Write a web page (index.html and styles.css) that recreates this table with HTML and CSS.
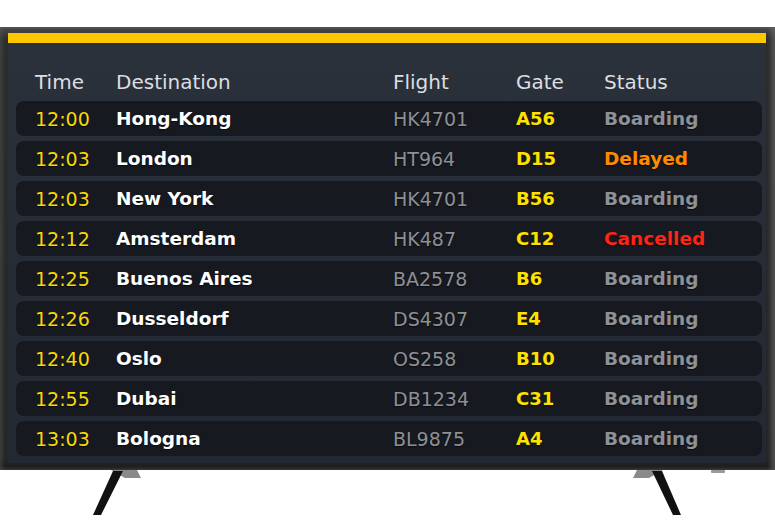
FILE: index.html
```html
<!DOCTYPE html>
<html lang="en">
<head>
    <meta charset="UTF-8">
    <meta name="viewport" content="width=device-width, initial-scale=1.0">
    <title>Departures</title>
    <link rel="stylesheet" href="styles.css">
</head>
<body>
    <div class="tv">
        <div class="screen">
            <div class="board-head">
                <span>Time</span>
                <span>Destination</span>
                <span>Flight</span>
                <span>Gate</span>
                <span>Status</span>
            </div>

            <div class="rows">
                <div class="row"><span class="time">12:00</span><span class="dest">Hong-Kong</span><span class="flight">HK4701</span><span class="gate">A56</span><span class="status">Boarding</span></div>
                <div class="row"><span class="time">12:03</span><span class="dest">London</span><span class="flight">HT964</span><span class="gate">D15</span><span class="status delayed">Delayed</span></div>
                <div class="row"><span class="time">12:03</span><span class="dest">New York</span><span class="flight">HK4701</span><span class="gate">B56</span><span class="status">Boarding</span></div>
                <div class="row"><span class="time">12:12</span><span class="dest">Amsterdam</span><span class="flight">HK487</span><span class="gate">C12</span><span class="status cancelled">Cancelled</span></div>
                <div class="row"><span class="time">12:25</span><span class="dest">Buenos Aires</span><span class="flight">BA2578</span><span class="gate">B6</span><span class="status">Boarding</span></div>
                <div class="row"><span class="time">12:26</span><span class="dest">Dusseldorf</span><span class="flight">DS4307</span><span class="gate">E4</span><span class="status">Boarding</span></div>
                <div class="row"><span class="time">12:40</span><span class="dest">Oslo</span><span class="flight">OS258</span><span class="gate">B10</span><span class="status">Boarding</span></div>
                <div class="row"><span class="time">12:55</span><span class="dest">Dubai</span><span class="flight">DB1234</span><span class="gate">C31</span><span class="status">Boarding</span></div>
                <div class="row"><span class="time">13:03</span><span class="dest">Bologna</span><span class="flight">BL9875</span><span class="gate">A4</span><span class="status">Boarding</span></div>
            </div>
        </div>
    </div>

    <!-- stand -->
    <div class="stand">
        <svg class="leg leg-left" width="60" height="50" viewBox="0 0 60 50">
            <path d="M22 0 L48 0 L52 8 L36 8 Z" fill="#8a8a8a"/>
            <path d="M24 1 L34 1 L12 45 L4 45 Z" fill="#111"/>
        </svg>
        <svg class="leg leg-right" width="60" height="50" viewBox="0 0 60 50">
            <path d="M38 0 L12 0 L8 8 L24 8 Z" fill="#8a8a8a"/>
            <path d="M27 1 L37 1 L56 45 L48 45 Z" fill="#111"/>
        </svg>
        <div class="foot-dot"></div>
    </div>
</body>
</html>
```

FILE: styles.css
```css
* {
    margin: 0;
    padding: 0;
    box-sizing: border-box;
}

body {
    background: #fff;
    font-family: 'DejaVu Sans', 'Open Sans', sans-serif;
    width: 775px;
    overflow: hidden;
}

.tv {
    margin-top: 27px;
    width: 775px;
    height: 443px;
    padding: 6px 9px 7px 8px;
    background: linear-gradient(to bottom, #4a4a4a 0%, #2c2c2c 3%, #262626 97%, #1c1c1c 100%);
    box-shadow: inset -4px 0 4px rgba(120, 120, 120, 0.5), inset 3px 0 3px rgba(90, 90, 90, 0.4);
}

.screen {
    height: 100%;
    background: linear-gradient(to bottom, #2a313b, #232932);
    border-top: 10px solid #fdc800;
    padding: 0 4px 7px 8px;
}

.board-head,
.row {
    display: grid;
    grid-template-columns: 81px 277px 123px 88px 1fr;
    padding-left: 19px;
    align-items: center;
}

.board-head {
    padding-top: 20px;
    height: 58px;
    font-size: 20px;
    line-height: 20px;
    color: #dcdee0;
}

.rows {
    display: flex;
    flex-direction: column;
    gap: 5px;
}

.row {
    height: 35px;
    background: #161a20;
    border-radius: 8px;
    font-size: 19px;
    text-shadow: 0 1px 1px rgba(0, 0, 0, 0.6);
}

.time {
    color: #f7d708;
}

.dest {
    color: #fff;
    font-weight: bold;
    font-size: 18.5px;
}

.flight {
    color: #8d9095;
}

.gate {
    color: #ffe100;
    font-weight: bold;
    font-size: 18px;
}

.status {
    color: #8e9196;
    font-weight: bold;
    font-size: 18.5px;
}

.status.delayed {
    color: #ff8a00;
}

.status.cancelled {
    color: #ff2414;
}

.stand {
    position: relative;
    height: 59px;
    display: flex;
    justify-content: space-between;
    padding: 0 90px 0 89px;
}

.leg {
    display: block;
}

.foot-dot {
    position: absolute;
    top: 0;
    left: 711px;
    width: 14px;
    height: 3px;
    background: #9a9a9a;
    border-radius: 1px;
}
```
